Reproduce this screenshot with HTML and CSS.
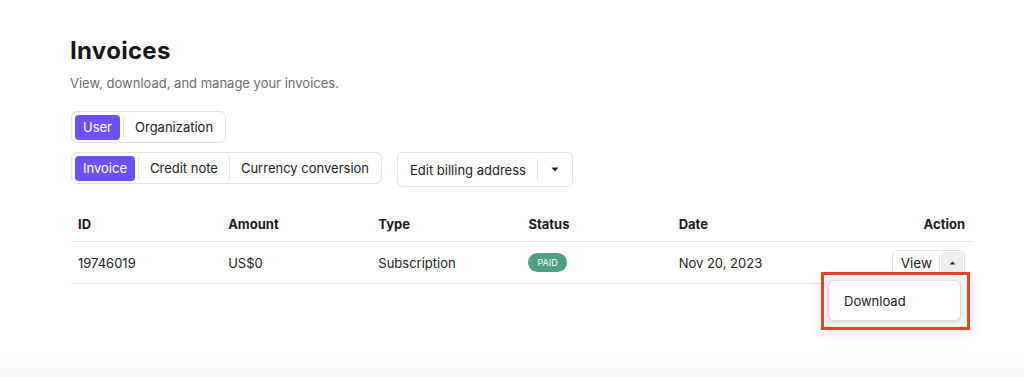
FILE: index.html
```html
<!DOCTYPE html>
<html lang="en">
<head>
    <meta charset="UTF-8">
    <title>Invoices</title>
    <link rel="stylesheet" href="styles.css">
</head>
<body>

<div class="page">
    <h1>Invoices</h1>
    <p class="subtitle">View, download, and manage your invoices.</p>

    <div class="segmented">
        <button class="seg active">User</button>
        <span class="seg-divider"></span>
        <button class="seg">Organization</button>
    </div>

    <div class="toolbar">
        <div class="segmented">
            <button class="seg active">Invoice</button>
            <span class="seg-divider"></span>
            <button class="seg">Credit note</button>
            <span class="seg-divider"></span>
            <button class="seg">Currency conversion</button>
        </div>

        <div class="split-btn billing">
            <span class="split-label">Edit billing address</span>
            <span class="split-divider"></span>
            <span class="split-caret">
                <svg width="8" height="5" viewBox="0 0 8 5"><path d="M0.5 0.5h7L4 4.5z" fill="#222"/></svg>
            </span>
        </div>
    </div>

    <table class="invoices">
        <thead>
            <tr>
                <th>ID</th>
                <th>Amount</th>
                <th>Type</th>
                <th>Status</th>
                <th>Date</th>
                <th class="right">Action</th>
            </tr>
        </thead>
        <tbody>
            <tr>
                <td>19746019</td>
                <td>US$0</td>
                <td>Subscription</td>
                <td><span class="badge">PAID</span></td>
                <td>Nov 20, 2023</td>
                <td class="right">
                    <div class="action-wrap">
                        <div class="split-btn small">
                            <span class="split-label">View</span>
                            <span class="split-divider"></span>
                            <span class="split-caret open">
                                <svg width="7" height="4" viewBox="0 0 7 4"><path d="M0.5 3.5h6L3.5 0.5z" fill="#222"/></svg>
                            </span>
                        </div>
                        <!-- highlighted dropdown -->
                        <div class="highlight">
                            <div class="menu">
                                <div class="menu-item">Download</div>
                            </div>
                        </div>
                    </div>
                </td>
            </tr>
        </tbody>
    </table>
</div>

<div class="footer-fade"></div>

</body>
</html>
```

FILE: styles.css
```css
body {
    margin: 0;
    font-family: Inter, "Noto Sans", sans-serif;
    background: #fff;
    color: #1c1c1e;
    height: 377px;
    overflow: hidden;
    position: relative;
}

.page {
    width: 901px;
    margin-left: 71px;
    padding-top: 36px;
}

h1 {
    margin: 0 0 0 -1px;
    font-size: 24px;
    line-height: 30px;
    font-weight: 700;
    color: #18181b;
    letter-spacing: 0.3px;
}

.subtitle {
    margin: 8px 0 19px -1px;
    font-size: 13px;
    line-height: 18px;
    color: #6b6b70;
}

.segmented {
    display: inline-flex;
    align-items: center;
    height: 32px;
    box-sizing: border-box;
    padding: 0 1px 0 3px;
    border: 1px solid #e2e2e5;
    border-radius: 6px;
    background: #fff;
}

.seg {
    border: none;
    background: transparent;
    font-family: inherit;
    font-size: 13px;
    color: #222;
    height: 25px;
    padding: 0 11px;
    border-radius: 4px;
    cursor: pointer;
}

.seg.active {
    background: #6e4ff6;
    color: #fff;
    padding: 0 8px;
    margin-right: 3px;
}

.seg-divider {
    width: 1px;
    height: 22px;
    background: #e4e4e7;
}

.toolbar {
    display: flex;
    align-items: flex-start;
    gap: 15px;
    margin-top: 9px;
}

.split-btn {
    display: inline-flex;
    align-items: center;
    box-sizing: border-box;
    border: 1px solid #e2e2e5;
    border-radius: 6px;
    background: #fff;
    font-size: 13px;
    color: #222;
}

.billing {
    height: 35px;
}

.billing .split-label {
    padding: 0 11px 0 12px;
}

.split-divider {
    width: 1px;
    height: 22px;
    background: #e4e4e7;
}

.billing .split-caret {
    width: 34px;
    display: flex;
    justify-content: center;
}

.invoices {
    width: 901px;
    table-layout: fixed;
    border-collapse: collapse;
    margin-top: 19px;
    font-size: 13px;
}

.invoices th, .invoices td {
    text-align: left;
    padding: 0 7px;
}

.invoices th {
    font-weight: 700;
    height: 35px;
    vertical-align: middle;
    border-bottom: 1px solid #e6e6e8;
}

.invoices td {
    height: 41px;
    border-bottom: 1px solid #e6e6e8;
    color: #222;
}

.invoices .right {
    text-align: right;
}

.badge {
    display: inline-block;
    background: #4e9f83;
    color: #fff;
    font-size: 9px;
    line-height: 19px;
    padding: 0 9px;
    border-radius: 10px;
    vertical-align: middle;
}

.action-wrap {
    position: relative;
    display: inline-block;
}

.split-btn.small {
    height: 25px;
    border-radius: 5px;
    vertical-align: middle;
}

.small .split-label {
    padding: 0 7px 0 8px;
    font-size: 13.5px;
}

.small .split-divider {
    height: 16px;
}

.small .split-caret {
    width: 22px;
    height: 21px;
    margin: 0 1px;
    border-radius: 4px;
    display: flex;
    align-items: center;
    justify-content: center;
}

.split-caret.open {
    background: #efeff1;
}

.highlight {
    position: absolute;
    top: 22px;
    right: -5px;
    width: 143px;
    height: 52px;
    border: 3px solid #e8432a;
    background: #f3f3f4;
    box-shadow: 0 6px 14px rgba(0, 0, 0, 0.08);
    text-align: left;
}

.menu {
    margin: 5px 6px 0 4px;
    height: 41px;
    box-sizing: border-box;
    background: #fff;
    border: 1px solid #dedee1;
    border-radius: 7px;
    box-shadow: 0 1px 3px rgba(0, 0, 0, 0.12);
    display: flex;
    align-items: center;
}

.menu-item {
    padding-left: 15px;
    font-size: 13px;
    color: #222;
}

.footer-fade {
    position: absolute;
    left: 0;
    right: 0;
    bottom: 0;
    height: 30px;
    background: linear-gradient(to bottom, rgba(246, 246, 247, 0), #f6f6f7);
}
```
